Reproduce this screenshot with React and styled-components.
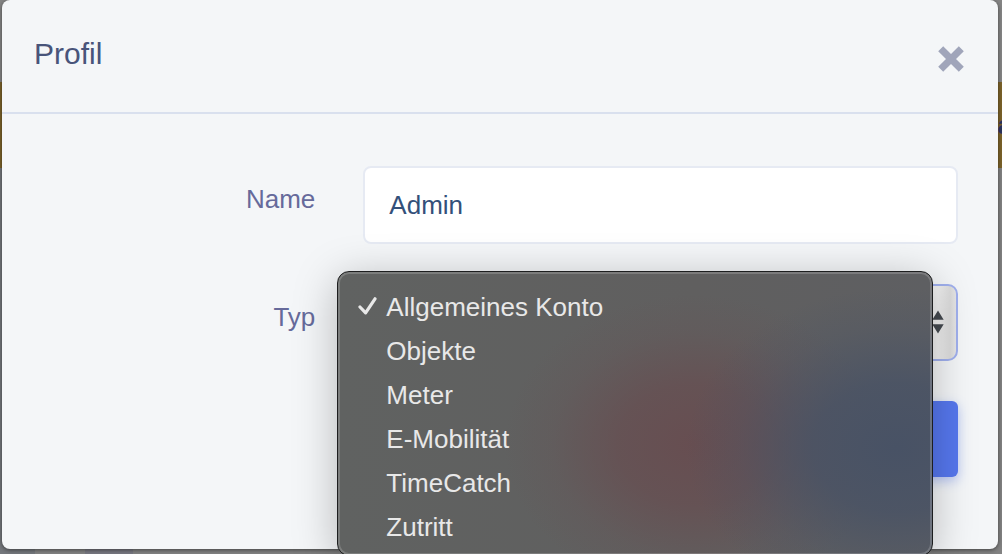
import { useState } from "react";
import styled, { createGlobalStyle } from "styled-components";

const COLORS = {
  surface: "#f4f6f8",
  title: "#48547a",
  label: "#666a9b",
  text: "#33507a",
  line: "#d9e0ee",
  inputLine: "#e6eaf3",
  focus: "#a0b0ee",
  primary: "#5677ee",
  close: "#a0a5ba",
};

const TYPES = ["Allgemeines Konto", "Objekte", "Meter", "E-Mobilität", "TimeCatch", "Zutritt"];

const App = () => {
  const [name, setName] = useState("Admin");
  const [type, setType] = useState(TYPES[0]);

  return (
    <Shell>
      <GlobalStyle />
      <Page aria-hidden="true">
        <Banner>
          <BannerText>a</BannerText>
        </Banner>
        <PageFooter />
      </Page>

      <Modal role="dialog" aria-labelledby="profile-title">
        <Header>
          <Title id="profile-title">Profil</Title>
          <CloseButton type="button" aria-label="Schliessen">
            <svg width="26" height="26" viewBox="0 0 26 26" aria-hidden="true">
              <path
                d="M5.2 0.2 13 8 20.8 0.2 25.8 5.2 18 13 25.8 20.8 20.8 25.8 13 18 5.2 25.8 0.2 20.8 8 13 0.2 5.2Z"
                fill="currentColor"
              />
            </svg>
          </CloseButton>
        </Header>

        <Form onSubmit={(event) => event.preventDefault()}>
          <Label htmlFor="profile-name">Name</Label>
          <Field>
            <Input id="profile-name" value={name} onChange={(event) => setName(event.target.value)} />
          </Field>

          <Label htmlFor="profile-type">Typ</Label>
          <Field>
            <Select id="profile-type" value={type} onChange={(event) => setType(event.target.value)}>
              {TYPES.map((item) => (
                <option key={item}>{item}</option>
              ))}
            </Select>
            <Arrows width="12" height="24" viewBox="0 0 12 24" aria-hidden="true">
              <path d="M6 0.5 11.7 9.7H0.3ZM0.3 14.3H11.7L6 23.5Z" fill="#454a50" />
            </Arrows>
            <Menu role="listbox" aria-label="Typ">
              {TYPES.map((item) => (
                <MenuItem
                  key={item}
                  role="option"
                  aria-selected={item === type}
                  onClick={() => setType(item)}
                >
                  <Tick>
                    {item === type && (
                      <svg width="20" height="20" viewBox="0 0 20 20" aria-hidden="true">
                        <path
                          d="M2 10 7.6 15.8 17 1.8"
                          fill="none"
                          stroke="currentColor"
                          strokeWidth="3.2"
                          strokeLinecap="round"
                          strokeLinejoin="round"
                        />
                      </svg>
                    )}
                  </Tick>
                  {item}
                </MenuItem>
              ))}
            </Menu>
          </Field>

          <Actions>
            <SaveButton type="submit" aria-label="Speichern" />
          </Actions>
        </Form>
      </Modal>
    </Shell>
  );
};

const GlobalStyle = createGlobalStyle`
  *, *::before, *::after {
    box-sizing: border-box;
  }

  body {
    margin: 0;
    overflow: hidden;
    font-family: "Liberation Sans", Arial, sans-serif;
    font-size: 26px;
    line-height: 30px;
  }
`;

// The page and the modal share one grid cell
const Shell = styled.div`
  display: grid;
  min-height: 100vh;
  overflow: hidden;
`;

const Page = styled.div`
  grid-area: 1 / 1;
  display: flex;
  flex-direction: column;
  padding-top: 82px;
  background: #858585;
`;

const Banner = styled.div`
  display: flex;
  justify-content: flex-end;
  align-items: center;
  height: 86px;
  background: #7c632a;
`;

const BannerText = styled.strong`
  margin-right: -10px;
  color: #2c3560;
`;

const PageFooter = styled.div`
  flex: 1;
  background: linear-gradient(90deg, #74777c 35px, #828282 35px 85px, #777780 85px 133px, #828282 133px);
`;

const Modal = styled.section`
  grid-area: 1 / 1;
  align-self: start;
  margin: 0 4px 0 2px;
  background: ${COLORS.surface};
  border-radius: 8px;
  box-shadow: 0 1px 4px rgba(0, 0, 0, 0.5);
`;

const Header = styled.header`
  display: flex;
  justify-content: space-between;
  align-items: flex-start;
  padding: 36px 32px 38px;
  border-bottom: 2px solid ${COLORS.line};
`;

const Title = styled.h1`
  margin: 0;
  font-size: 30px;
  font-weight: 400;
  line-height: 36px;
  color: ${COLORS.title};
`;

const CloseButton = styled.button`
  display: flex;
  margin-top: 8px;
  padding: 2px;
  border: 0;
  background: none;
  color: ${COLORS.close};
  cursor: pointer;
`;

const Form = styled.form`
  display: grid;
  grid-template-columns: 1fr 2fr;
  gap: 40px 48px;
  padding: 52px 40px 72px 16px;
`;

const Label = styled.label`
  padding-top: 18px;
  text-align: right;
  color: ${COLORS.label};
`;

const Field = styled.div`
  position: relative;
`;

const Input = styled.input`
  display: block;
  width: 100%;
  height: 78px;
  padding: 0 24px;
  border: 2px solid ${COLORS.inputLine};
  border-radius: 8px;
  background: white;
  font: inherit;
  color: ${COLORS.text};
  outline: none;
`;

const Select = styled.select`
  appearance: none;
  display: block;
  width: 100%;
  height: 77px;
  padding: 0 48px 0 24px;
  border: 2px solid ${COLORS.focus};
  border-radius: 10px;
  background: linear-gradient(90deg, #f2f2f2 97%, #dcdcdc 99%, #e6e6e6);
  font: inherit;
  color: ${COLORS.text};
  outline: none;
`;

const Arrows = styled.svg`
  position: absolute;
  top: 26px;
  right: 14px;
  pointer-events: none;
`;

const Menu = styled.ul`
  position: absolute;
  top: -13px;
  left: -26px;
  right: 25px;
  z-index: 1;
  margin: 0;
  padding: 13px 0 6px;
  list-style: none;
  border: 1px solid #1d1e1f;
  border-radius: 12px;
  background:
    radial-gradient(ellipse 210px 160px at 94% 62%, #485265 0%, rgba(72, 82, 101, 0.8) 40%, rgba(72, 82, 101, 0.25) 75%, rgba(72, 82, 101, 0) 100%),
    radial-gradient(ellipse 190px 150px at 60% 61%, #674e51 0%, rgba(103, 78, 81, 0.75) 40%, rgba(103, 78, 81, 0.2) 75%, rgba(103, 78, 81, 0) 100%),
    linear-gradient(90deg, #606261, #605f5f 60%, #5e5f62);
  box-shadow:
    inset 0 0 0 2px rgba(255, 255, 255, 0.18),
    0 8px 44px rgba(0, 0, 0, 0.26);
  color: #e8e8e8;
`;

const MenuItem = styled.li`
  display: flex;
  align-items: center;
  height: 44px;
  padding-left: 20px;
  cursor: default;
`;

const Tick = styled.span`
  display: flex;
  width: 28px;
`;

const Actions = styled.div`
  grid-column: 2;
  display: flex;
  justify-content: flex-end;
`;

const SaveButton = styled.button`
  width: 168px;
  height: 76px;
  border: 0;
  border-radius: 6px;
  background: ${COLORS.primary};
  box-shadow: 0 4px 12px rgba(86, 119, 238, 0.4);
  cursor: pointer;
`;

export default App;
